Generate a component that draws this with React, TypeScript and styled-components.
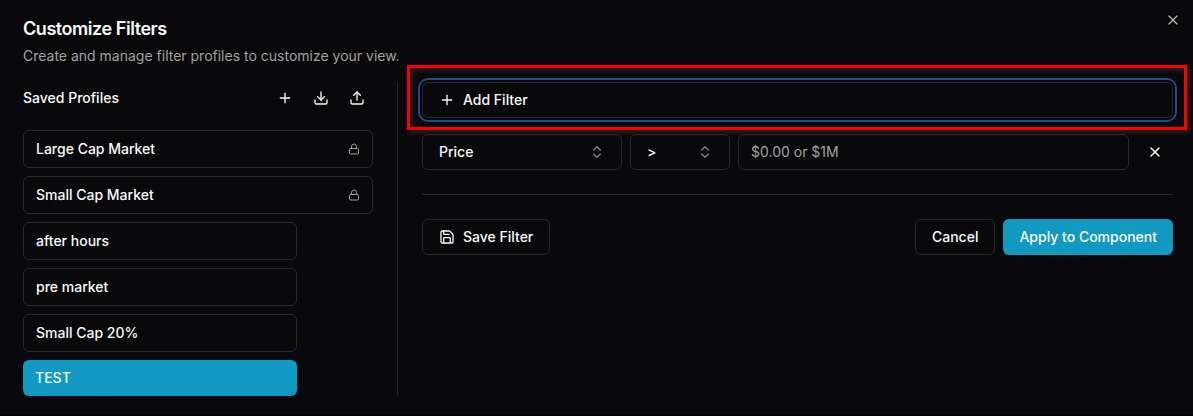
import React from 'react';
import styled, { createGlobalStyle, css } from 'styled-components';
import { ChevronsUpDown, Download, Lock, Plus, Save, Upload, X } from 'lucide-react';

const GlobalStyle = createGlobalStyle`
  *, *::before, *::after { box-sizing: border-box; }
  body {
    margin: 0;
    background: #09090b;
    color: #fafafa;
    font-family: Inter, "Liberation Sans", sans-serif;
    font-size: 14px;
    line-height: 20px;
  }
  button, input { font: inherit; color: inherit; }
`;

const Dialog = styled.main`
  position: relative;
  width: 1193px;
  height: 416px;
  padding: 20px 20px 20px 23px;
  overflow: hidden;
  background: #09090b;
  border-bottom: 1px solid #030304;
`;

const Title = styled.h2`
  margin: 0;
  font-size: 18px;
  font-weight: 600;
  line-height: 18px;
  letter-spacing: -0.45px;
`;

const Description = styled.p`
  margin: 8px 0 16px;
  color: #a1a1a1;
`;

const CloseButton = styled.button`
  position: absolute;
  top: 12px;
  right: 12px;
  display: flex;
  padding: 0;
  border: 0;
  background: none;
  opacity: 0.7;
`;

const Columns = styled.div`
  display: flex;
  gap: 24px;
`;

const Sidebar = styled.aside`
  width: 375px;
  height: 314px;
  padding-right: 24px;
  border-right: 1px solid #272727;
`;

const SidebarHeader = styled.div`
  display: flex;
  align-items: center;
  justify-content: space-between;
  height: 32px;
  margin-bottom: 16px;
`;

const SidebarTitle = styled.h3`
  margin: 0;
  font-size: 14px;
  font-weight: 500;
`;

const IconGroup = styled.div`
  display: flex;
  gap: 4px;
`;

const IconButton = styled.button<{ $size: number }>`
  display: flex;
  align-items: center;
  justify-content: center;
  width: ${(p) => p.$size}px;
  height: ${(p) => p.$size}px;
  padding: 0;
  border: 0;
  background: none;
`;

const ProfileList = styled.div`
  display: flex;
  flex-direction: column;
  gap: 8px;
`;

const Profile = styled.button<{ $wide?: boolean; $active?: boolean }>`
  display: flex;
  align-items: center;
  justify-content: space-between;
  width: ${(p) => (p.$wide ? 350 : 274)}px;
  height: 38px;
  padding: 0 12px;
  border: 1px solid #272727;
  border-radius: 6px;
  background: transparent;
  font-weight: 500;
  text-align: left;

  svg { color: #a1a1a1; }

  ${(p) => p.$active && css`
    height: 36px;
    border: 0;
    background: #1199c1;
  `}
`;

const Editor = styled.section`
  width: 751px;
`;

const Button = styled.button<{ $primary?: boolean; $focused?: boolean; $block?: boolean }>`
  display: flex;
  align-items: center;
  gap: 8px;
  width: ${(p) => (p.$block ? '100%' : 'auto')};
  height: 36px;
  padding: 0 16px;
  border: 1px solid #272727;
  border-radius: 6px;
  background: transparent;
  font-weight: 500;
  white-space: nowrap;

  ${(p) => p.$primary && css`
    border: 0;
    background: #1199c1;
  `}
  ${(p) => p.$focused && css`
    box-shadow: 0 0 0 2px #09090b, 0 0 0 4px #1c4d8e;
  `}
`;

const AddFilterArea = styled.div`
  position: relative;
`;

const Highlight = styled.div`
  position: absolute;
  top: -17px;
  left: -15px;
  width: 780px;
  height: 65px;
  border: 3px solid #ff0000;
  box-shadow: 2px 2px 4px 1px rgba(60, 60, 60, 0.5), inset 2px 2px 4px 1px rgba(60, 60, 60, 0.5);
  pointer-events: none;
`;

const FilterRow = styled.div`
  display: flex;
  gap: 8px;
  margin-top: 16px;
`;

const Select = styled.button<{ $width: number }>`
  display: flex;
  align-items: center;
  justify-content: space-between;
  width: ${(p) => p.$width}px;
  height: 36px;
  padding: 0 16px;
  border: 1px solid #272727;
  border-radius: 6px;
  background: transparent;
  font-weight: 500;

  svg { opacity: 0.5; }
`;

const ValueInput = styled.input`
  width: 391px;
  height: 36px;
  padding: 0 12px 2px;
  border: 1px solid #272727;
  border-radius: 6px;
  background: transparent;

  &::placeholder { color: #a1a1a1; opacity: 1; }
`;

const Divider = styled.hr`
  height: 1px;
  margin: 24px 0;
  border: 0;
  background: #272727;
`;

const Footer = styled.footer`
  display: flex;
  justify-content: space-between;
`;

const FooterActions = styled.div`
  display: flex;
  gap: 8px;
`;

const profiles = [
  { name: 'Large Cap Market', locked: true },
  { name: 'Small Cap Market', locked: true },
  { name: 'after hours' },
  { name: 'pre market' },
  { name: 'Small Cap 20%' },
  { name: 'TEST', active: true },
];

export default function App() {
  return (
    <>
      <GlobalStyle />
      <Dialog>
        <Title>Customize Filters</Title>
        <Description>Create and manage filter profiles to customize your view.</Description>
        <Columns>
          <Sidebar>
            <SidebarHeader>
              <SidebarTitle>Saved Profiles</SidebarTitle>
              <IconGroup>
                <IconButton $size={32} aria-label="New profile"><Plus size={16} /></IconButton>
                <IconButton $size={32} aria-label="Download"><Download size={16} /></IconButton>
                <IconButton $size={32} aria-label="Upload"><Upload size={16} /></IconButton>
              </IconGroup>
            </SidebarHeader>
            <ProfileList>
              {profiles.map((p) => (
                <Profile key={p.name} $wide={p.locked} $active={p.active}>
                  {p.name}
                  {p.locked && <Lock size={12} />}
                </Profile>
              ))}
            </ProfileList>
          </Sidebar>
          <Editor>
            <AddFilterArea>
              <Button $block $focused><Plus size={16} />Add Filter</Button>
              <Highlight />
            </AddFilterArea>
            <FilterRow>
              <Select $width={200}>Price<ChevronsUpDown size={16} /></Select>
              <Select $width={100}>&gt;<ChevronsUpDown size={16} /></Select>
              <ValueInput placeholder="$0.00 or $1M" />
              <IconButton $size={36} aria-label="Remove filter"><X size={16} /></IconButton>
            </FilterRow>
            <Divider />
            <Footer>
              <Button><Save size={16} />Save Filter</Button>
              <FooterActions>
                <Button>Cancel</Button>
                <Button $primary>Apply to Component</Button>
              </FooterActions>
            </Footer>
          </Editor>
        </Columns>
        <CloseButton aria-label="Close"><X size={16} /></CloseButton>
      </Dialog>
    </>
  );
}
